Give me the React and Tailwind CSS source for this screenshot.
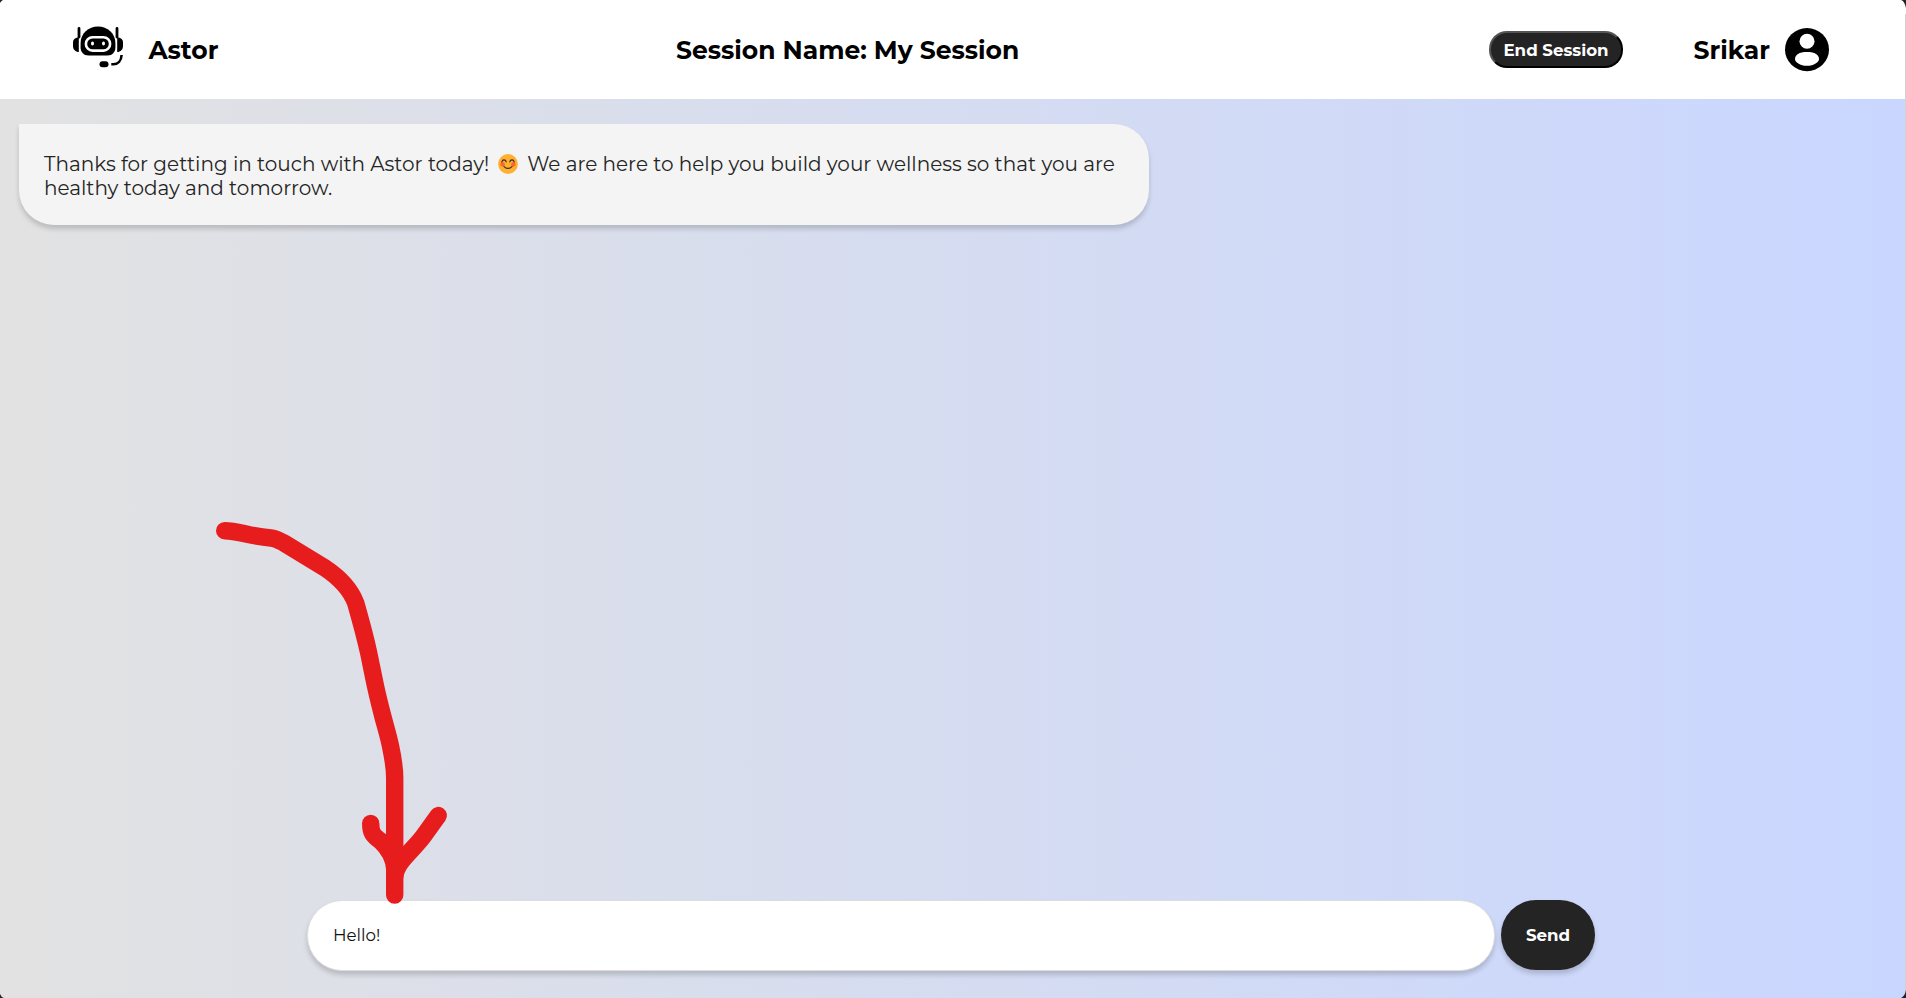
import React from "react";

function BotIcon() {
  return (
    <svg className="h-[42px] w-[50px] shrink-0" viewBox="0 0 50 42" fill="none">
      <path d="M6 2.5V11M44 2.5V11" stroke="#000" strokeWidth="2.8" strokeLinecap="round" />
      <path d="M5.8 11.5V26C2.5 26 0 23.5 0 20v-3.5c0-3.200 2.500-5 5.800-5z" fill="#000" />
      <path d="M44.200 11.500V26C47.500 26 50 23.500 50 20v-3.500c0-3.200-2.500-5-5.800-5z" fill="#000" />
      <path d="M25 0.500C15.500 0.500 7.600 7.500 7.600 17v4.500c0 4.500 3.200 8 7.900 8h19c4.700 0 7.900-3.500 7.900-8V17C42.400 7.500 34.500 0.500 25 0.500z" fill="#000" />
      <rect x="12.900" y="11.200" width="24.200" height="13.400" rx="6.700" stroke="#fff" strokeWidth="2.600" />
      <ellipse cx="19.500" cy="17.500" rx="1.500" ry="1.900" fill="#fff" />
      <ellipse cx="30.500" cy="17.500" rx="1.500" ry="1.900" fill="#fff" />
      <rect x="26.500" y="35.200" width="9" height="6" rx="3" fill="#000" />
      <path d="M38.300 38.300h2c4.500 0 8-3.500 8.300-9.300" stroke="#000" strokeWidth="2.600" />
    </svg>
  );
}

function AvatarIcon() {
  return (
    <svg className="h-[44px] w-[44px] shrink-0" viewBox="0 0 44 44">
      <ellipse cx="22" cy="21.600" rx="22" ry="21.600" fill="#000" />
      <circle cx="22" cy="13.300" r="7.500" fill="#fff" />
      <path d="M10 31.200C10 26.700 14 24 22 24s12 2.700 12 7.200c0 2.800-5 6.600-12 6.600s-12-3.800-12-6.600z" fill="#fff" />
    </svg>
  );
}

function SmileEmoji() {
  return (
    <svg className="mr-[9px] ml-[9px] inline-block h-[20px] w-[20px] align-[-3px]" viewBox="0 0 20 20" fill="none">
      <circle cx="10" cy="10" r="9.900" fill="#ffb02e" />
      <circle cx="4.600" cy="10.300" r="2.200" fill="#ff6533" />
      <circle cx="15.400" cy="10.300" r="2.200" fill="#ff6533" />
      <path d="M3.800 7.800C4.500 5.100 7.500 5.100 8.200 7.800M11.800 7.800C12.500 5.100 15.500 5.100 16.200 7.800M6 12.500C8 15.100 12 15.100 14 12.500" stroke="#402a32" strokeWidth="1.200" strokeLinecap="round" />
    </svg>
  );
}

export default function App() {
  return (
    <div className="relative flex h-[998px] w-[1906px] flex-col overflow-hidden bg-linear-to-r from-[#e2e2e2] to-[#c9d6ff] font-[Montserrat,Inter,sans-serif] text-black">
      <header className="flex h-[99px] shrink-0 items-center bg-white whitespace-nowrap">
        <div className="flex w-[676px] items-center pl-[73px]">
          <div className="pb-[6px]"><BotIcon /></div>
          <span className="ml-[25.500px] pt-[3px] text-[25px] font-bold">Astor</span>
        </div>
        <h1 className="w-[813px] pt-[3px] text-[25px] font-bold">Session Name: My Session</h1>
        <button className="h-[37px] w-[134px] rounded-[18px] border-2 border-t-[#545454] border-r-black border-b-black border-l-[#545454] bg-[#242424] pt-[1px] text-[16.670px] leading-[20px] font-bold text-white">
          End Session
        </button>
        <span className="ml-[70.500px] w-[91.500px] pt-[3px] text-[25px] font-bold">Srikar</span>
        <AvatarIcon />
      </header>

      <main className="flex grow flex-col justify-between pt-[25px] pb-[27px]">
        <div className="ml-[19px] h-[101px] w-[1130px] rounded-[35px] rounded-tl-none bg-[#f4f4f4] px-[25px] pt-[28px] text-[20px] leading-[24px] font-normal whitespace-nowrap text-[#242424] shadow-[0_4px_5px_rgba(0,0,0,0.17)]">
          <p>
            <span>Thanks for getting in touch with Astor today!</span>
            <SmileEmoji />
            <span>We are here to help you build your wellness so that you are</span>
          </p>
          <p>healthy today and tomorrow.</p>
        </div>

        <form className="flex gap-[6px] pl-[307px]">
          <input
            className="h-[71px] w-[1188px] rounded-[35px] border border-[#dddddd] bg-white px-[25px] pb-[2px] text-[16.670px] font-normal text-[#111111] shadow-[0_4px_5px_rgba(0,0,0,0.17)] outline-none"
            defaultValue="Hello!"
          />
          <button type="button" className="h-[70px] w-[94px] rounded-[35px] bg-[#242424] text-[16.670px] font-bold text-white shadow-[0_4px_5px_rgba(0,0,0,0.17)]">
            Send
          </button>
        </form>
      </main>

      <svg className="pointer-events-none absolute inset-0 h-[998px] w-[1906px]" viewBox="0 0 1906 998" fill="none">
        <g stroke="#e71d1d" strokeWidth="17.400" strokeLinecap="round" strokeLinejoin="round">
          <path d="M224.700 530.700C239 530.700 247 536 271 538C276 538.400 280 541 284 543L325 568C340 578 350 588 355.700 603C360 618 365 636 368.700 653C371 664 373.300 676 375.700 687C377.900 697 380.400 707 383 717C385.600 727 388.500 736 390.700 747C393 758 394.700 766 394.700 778V895" />
          <path d="M370.700 823.500C370.700 833 373 835.500 380.500 841C389 849 394 857 394.700 869" />
          <path d="M438.300 815.500L425 834C415 849 396 861 394.700 877" />
        </g>
        <path d="M1905.500 14V998" stroke="#d2d2d2" />
        <path d="M1901 0h5v8C1905 4 1904 1 1901 0zM0 0h3Q1 1 0 3zM0 998v-4q1 3 4 4zM1906 998h-5q4-2 5-8z" fill="#242424" />
      </svg>
    </div>
  );
}
